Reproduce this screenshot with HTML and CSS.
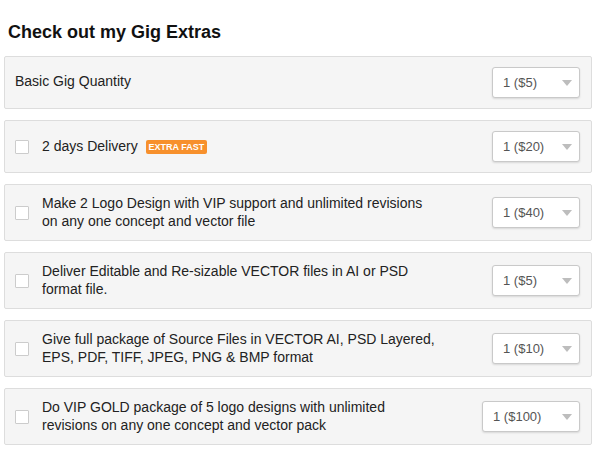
FILE: index.html
```html
<!DOCTYPE html>
<html>
<head>
<meta charset="utf-8">
<link rel="stylesheet" href="styles.css">
</head>
<body>
<div class="extras">
  <h2 class="title">Check out my Gig Extras</h2>
  <div class="card">
    <div class="label first">Basic Gig Quantity</div>
    <div class="select"><span>1 ($5)</span><i class="caret"></i></div>
  </div>
  <div class="card">
    <div class="left"><span class="check"></span><div class="label">2 days Delivery <span class="badge">Extra Fast</span></div></div>
    <div class="select"><span>1 ($20)</span><i class="caret"></i></div>
  </div>
  <div class="card">
    <div class="left"><span class="check"></span><div class="label">Make 2 Logo Design with VIP support and unlimited revisions<br>on any one concept and vector file</div></div>
    <div class="select"><span>1 ($40)</span><i class="caret"></i></div>
  </div>
  <div class="card">
    <div class="left"><span class="check"></span><div class="label">Deliver Editable and Re-sizable VECTOR files in AI or PSD<br>format file.</div></div>
    <div class="select"><span>1 ($5)</span><i class="caret"></i></div>
  </div>
  <div class="card">
    <div class="left"><span class="check"></span><div class="label">Give full package of Source Files in VECTOR AI, PSD Layered,<br>EPS, PDF, TIFF, JPEG, PNG &amp; BMP format</div></div>
    <div class="select"><span>1 ($10)</span><i class="caret"></i></div>
  </div>
  <div class="card">
    <div class="left"><span class="check"></span><div class="label">Do VIP GOLD package of 5 logo designs with unlimited<br>revisions on any one concept and vector pack</div></div>
    <div class="select wide"><span>1 ($100)</span><i class="caret"></i></div>
  </div>
</div>
</body>
</html>
```

FILE: styles.css
```css
html, body {
  margin: 0;
  padding: 0;
  background: #fff;
}
body {
  font-family: Arial, "Liberation Sans", sans-serif;
  color: #222;
}
.extras {
  padding: 0 5px 0 4px;
  display: flex;
  flex-direction: column;
  gap: 11px;
}
.title {
  margin: 22px 0 2px 4px;
  font-size: 18px;
  line-height: 21px;
  font-weight: bold;
  color: #111;
}
.card {
  display: flex;
  align-items: center;
  justify-content: space-between;
  background: #f5f5f5;
  border: 1px solid #ddd;
  border-radius: 2px;
  padding: 10px 11px 10px 10px;
}
.left {
  display: flex;
  align-items: center;
  gap: 13px;
}
.check {
  flex: none;
  width: 12px;
  height: 12px;
  background: #fff;
  border: 1px solid #ccc;
  border-radius: 1px;
}
.label {
  font-size: 14px;
  line-height: 17.5px;
  color: #222;
}
.label.first {
  align-self: flex-start;
  margin-top: 6px;
}
.badge {
  display: inline-block;
  margin-left: 4px;
  padding: 0 3px;
  height: 14px;
  line-height: 14px;
  background: #f7902c;
  color: #fff;
  font-size: 9px;
  font-weight: bold;
  text-transform: uppercase;
  border-radius: 2px;
  vertical-align: 1px;
}
.select {
  flex: none;
  box-sizing: border-box;
  width: 88px;
  height: 31px;
  display: flex;
  align-items: center;
  justify-content: space-between;
  padding: 0 7px 0 10px;
  background: #fff;
  border: 1px solid #c9c9c9;
  border-radius: 3px;
  box-shadow: 0 1px 2px rgba(0,0,0,0.12);
  font-size: 13px;
  color: #555;
}
.select.wide {
  width: 98px;
}
.caret {
  width: 0;
  height: 0;
  border-left: 5px solid transparent;
  border-right: 5px solid transparent;
  border-top: 6px solid #bdbdbd;
}
```
